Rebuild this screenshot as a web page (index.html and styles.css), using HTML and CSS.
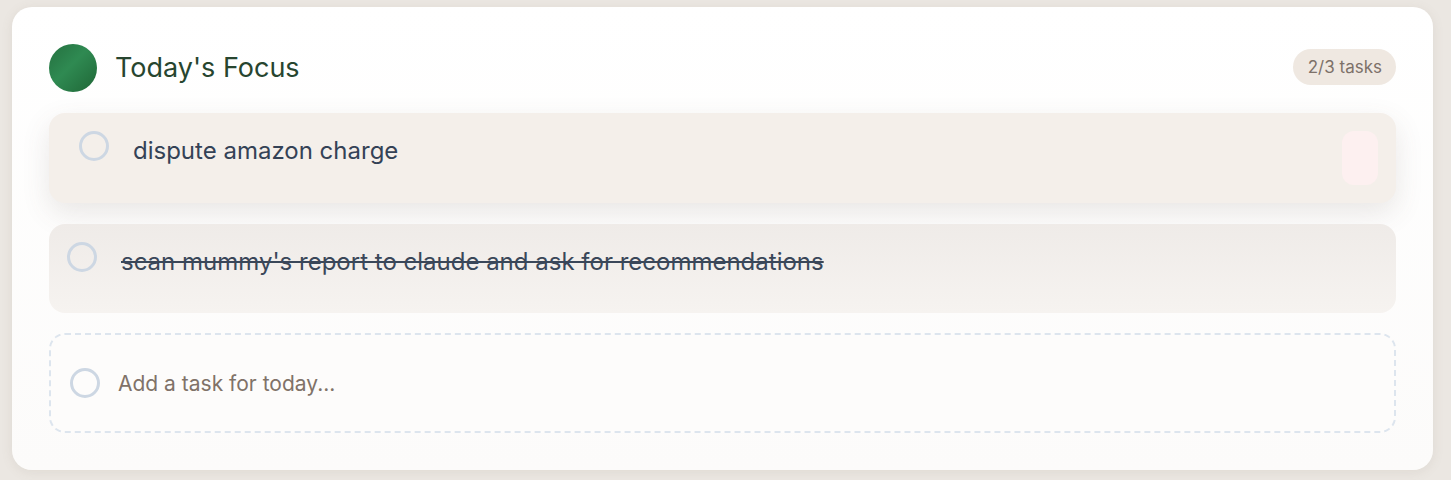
FILE: index.html
```html
<!DOCTYPE html>
<html>
<head>
<meta charset="utf-8">
<link rel="stylesheet" href="styles.css">
</head>
<body>
<div class="card">
  <div class="header">
    <div class="logo"></div>
    <h1 class="title">Today's Focus</h1>
    <span class="badge">2/3 tasks</span>
  </div>
  <div class="list">
    <div class="task task-active">
      <span class="check"></span>
      <span class="task-text">dispute amazon charge</span>
      <span class="del"></span>
    </div>
    <div class="task task-done">
      <span class="check"></span>
      <span class="task-text done">scan mummy's report to claude and ask for recommendations</span>
    </div>
    <div class="add">
      <span class="check"></span>
      <span class="placeholder">Add a task for today...</span>
    </div>
  </div>
</div>
</body>
</html>
```
FILE: styles.css
```css
* { box-sizing: border-box; }
html, body { margin: 0; }
body {
  background: #ebe7e2;
  font-family: Inter, "Noto Sans", sans-serif;
  height: 480px;
  overflow: hidden;
  padding: 7px 18px 0 12px;
}
.card {
  background: linear-gradient(180deg, #ffffff 0%, #fcfbfa 100%);
  border-radius: 20px;
  padding: 37px 37px 37px 37px;
  height: 463px;
  box-shadow: 0 2px 12px rgba(120, 100, 80, 0.1);
}
.header {
  display: flex;
  align-items: center;
  height: 48px;
}
.logo {
  width: 48px;
  height: 48px;
  border-radius: 50%;
  background: linear-gradient(135deg, #24703f 0%, #2f8a52 45%, #1f6636 100%);
  flex: none;
}
.title {
  margin: -2px 0 0 18px;
  font-size: 27px;
  font-weight: 400;
  color: #27452f;
  flex: 1;
}
.badge {
  background: #efe8e1;
  color: #7d7169;
  font-size: 17px;
  border-radius: 18px;
  height: 36px;
  line-height: 36px;
  padding: 0 14px 0 15px;
  margin-top: -2px;
}
.list {
  margin-top: 21px;
  display: flex;
  flex-direction: column;
  gap: 21px;
}
.task {
  display: flex;
  align-items: flex-start;
  border-radius: 16px;
  height: 90px;
  position: relative;
}
.task-active {
  background: #f4efea;
  padding: 18px 18px 0 30px;
  box-shadow: 0 10px 28px rgba(90, 80, 70, 0.13);
}
.task-done {
  background: linear-gradient(180deg, #efebe8 0%, #f6f3f0 100%);
  padding: 18px 18px 0 18px;
  height: 89px;
  margin-bottom: -1px;
}
.check {
  width: 30px;
  height: 30px;
  border-radius: 50%;
  border: 3px solid #cdd7e3;
  flex: none;
}
.task-text {
  font-size: 24px;
  color: #344256;
  margin-left: 24px;
  line-height: 30px;
  margin-top: 5px;
  flex: 1;
}
.done {
  text-decoration: line-through;
  text-decoration-thickness: 2px;
  color: #3a4759;
}
.del {
  width: 36px;
  height: 54px;
  background: #fdf0f0;
  border-radius: 12px;
  flex: none;
}
.add {
  height: 100px;
  border: 2px dashed #dde5ee;
  border-radius: 16px;
  display: flex;
  align-items: center;
  padding-left: 19px;
  background: #fdfcfb;
}
.placeholder {
  font-size: 21px;
  color: #807268;
  margin-left: 18px;
}
```
